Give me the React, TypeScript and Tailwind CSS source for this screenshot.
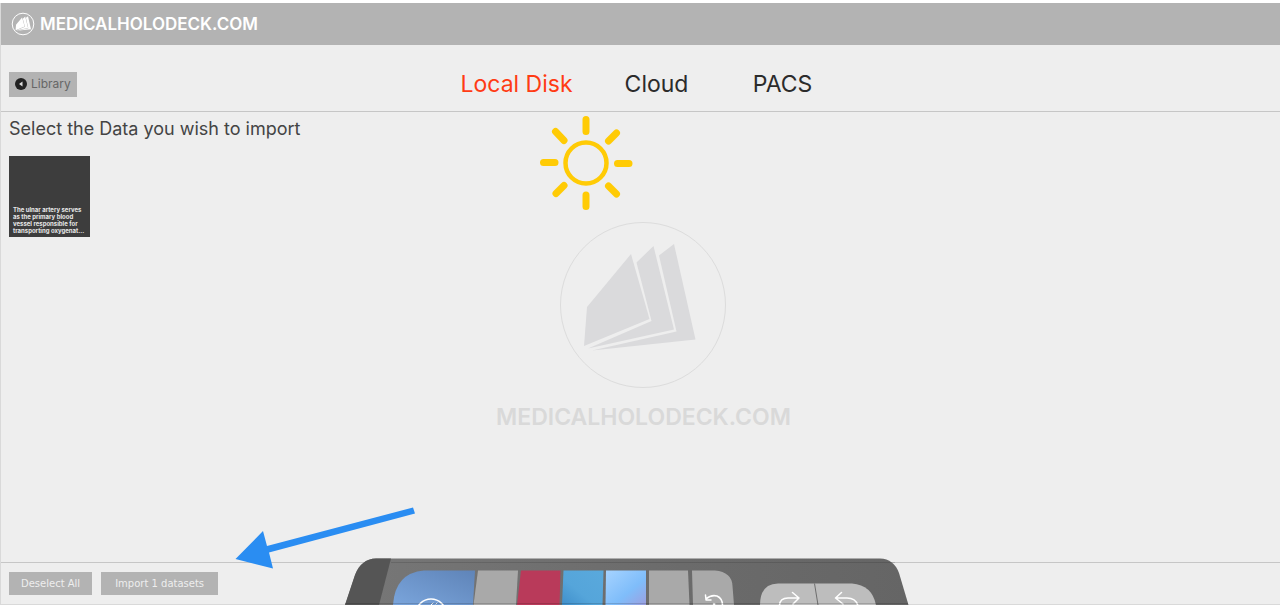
import React, { useState } from 'react';

const tabs = ['Local Disk', 'Cloud', 'PACS'];

const LogoShape: React.FC = () => (
  <>
    <path d="M631 254 L649.500 319 L584 346 L587 307 Z" />
    <path d="M636.500 262.500 L653.500 246 L674 329.500 L588 348.500 L651.500 321 Z" />
    <path d="M659 255.500 L674 244 L695.500 339.500 L592 350.500 L676.500 331.500 Z" />
  </>
);

const Sun: React.FC = () => (
  <svg viewBox="0 0 94 94" className="w-[94px] h-[94px]" fill="none" stroke="#ffcb05" strokeLinecap="round">
    <circle cx="47" cy="47" r="20.500" strokeWidth="4.500" />
    <path
      strokeWidth="7"
      d="M47 3.500v12M47 79v11.500M4.500 46.500h11.500M78.500 47.500h11.500M16.500 15.500l8.500 9M69.500 25l8-8M17 77.500l8-8M69.500 70l8 8"
    />
  </svg>
);

const Device: React.FC = () => (
  <svg viewBox="340 555 575 50" className="w-[575px] h-[50px]">
    <defs>
      <linearGradient id="body" x1="0" x2="1" y1="0" y2="0">
        <stop offset="0" stopColor="#777" />
        <stop offset="0.600" stopColor="#6b6b6b" />
        <stop offset="1" stopColor="#656565" />
      </linearGradient>
      <linearGradient id="navy" x1="0" x2="1" y1="1" y2="0">
        <stop offset="0" stopColor="#7aa5dc" />
        <stop offset="1" stopColor="#5f84b8" />
      </linearGradient>
      <linearGradient id="sky" x1="0" x2="1" y1="1" y2="0">
        <stop offset="0" stopColor="#3f8fcb" />
        <stop offset="0.400" stopColor="#55a5da" />
        <stop offset="1" stopColor="#5aa9dc" />
      </linearGradient>
      <linearGradient id="ice" x1="0" x2="1" y1="0" y2="1">
        <stop offset="0" stopColor="#a6d3ff" />
        <stop offset="0.600" stopColor="#7fbdfa" />
        <stop offset="1" stopColor="#9c9fe0" />
      </linearGradient>
    </defs>
    <path d="M345 605 L355 575 Q361 559 376 558.500 H880 Q894 559 899 573 L908.500 605 Z" fill="url(#body)" />
    <path d="M345 605 L355 575 Q361 559 376 558.500 H391 L379 605 Z" fill="#555" />
    <path d="M391 562.500 H895" stroke="#000" strokeOpacity="0.120" />
    <path d="M393 605 Q395 573 424 570.500 H475 L473 605 Z" fill="url(#navy)" />
    <path d="M478 570.500 H518 L516 605 H473.500 Z" fill="#a9a9a9" />
    <path d="M521 570.500 H560.500 L559.500 605 H517 Z" fill="#b93a5a" />
    <path d="M563.500 570.500 H603.500 L602.500 605 H562 Z" fill="url(#sky)" />
    <path d="M606 570.500 H646 V605 H605.500 Z" fill="url(#ice)" />
    <path d="M649 570.500 H688 L689.500 605 H649 Z" fill="#a9a9a9" />
    <path d="M692 570.500 H715 Q732 572 732.500 586 L734 605 H693 Z" fill="#a9a9a9" />
    <path d="M760 605 Q760 584 778 583.500 H852 Q872 585 876 605 Z" fill="#bdbdbd" />
    <path d="M814.500 583.500 L818 605" stroke="#6d6d6d" />
    <g fill="none" stroke="#fff" strokeWidth="1.500" strokeLinecap="round" strokeLinejoin="round">
      <circle cx="431" cy="614" r="15" />
      <path d="M431 605 l2 -2 M436 604 l1 -1" strokeWidth="1" />
      <path d="M706 599 Q711 594.500 717 596 Q722.500 598.500 722.500 605 M705.500 595 L706 600 L711 600" />
      <circle cx="714" cy="604" r="0.800" fill="#fff" strokeWidth="1" />
      <path d="M779.500 606 Q779.500 598 788 598 H799 M792.500 592.500 L799 598 L793 604" />
      <path d="M858 606 Q856 598 847 598 H836 M841.500 592.500 L835.500 598 L843 604" />
    </g>
    <path d="M345 603.500 H908" stroke="#000" strokeOpacity="0.150" />
  </svg>
);

const App: React.FC = () => {
  const [active, setActive] = useState('Local Disk');

  return (
    <div className="relative min-h-screen overflow-hidden flex flex-col pt-[3px] bg-white font-[Inter,sans-serif]">
      <div className="flex-1 flex flex-col border-l border-b border-[#d9d9d9] bg-[#eeeeee]">
        <header className="flex items-center h-[42px] pl-[10px] gap-[5px] bg-[#b3b3b3] text-white">
          <svg viewBox="0 0 24 24" className="w-6 h-6" fill="none">
            <circle cx="12" cy="12" r="10.800" stroke="#fff" />
            <g fill="#fff" transform="translate(-76 -29.500) scale(0.138)">
              <LogoShape />
            </g>
          </svg>
          <span className="text-[17px] leading-6 font-semibold">MEDICALHOLODECK.COM</span>
        </header>

        <nav className="grid grid-cols-[1fr_auto_1fr] items-center h-[67px] pt-3 pl-2 pr-1 border-b border-[#c6c6c6]">
          <button className="justify-self-start flex items-center gap-1 h-[25px] px-[6px] bg-[#b3b3b3] text-[12px] text-[#666]">
            <svg viewBox="0 0 12 12" className="w-3 h-3">
              <circle cx="6" cy="6" r="6" fill="#222" />
              <path d="M7.500 3.500v5L4 6z" fill="#ddd" />
            </svg>
            Library
          </button>
          <div className="flex gap-[42px]">
            {tabs.map((tab) => (
              <button
                key={tab}
                onClick={() => setActive(tab)}
                className={`min-w-[84px] text-[23px] leading-7 ${active === tab ? 'text-[#ff3b14]' : 'text-[#2b2b2b]'}`}
              >
                {tab}
              </button>
            ))}
          </div>
        </nav>

        <main className="relative flex-1 pl-2 pt-[6px]">
          <div className="absolute inset-x-0 top-[110px] pl-[6px] flex flex-col items-center gap-3 text-[#d9d9d9]">
            <svg viewBox="560 222 167 167" className="w-[167px] h-[167px]" fill="#dadadc">
              <circle cx="643" cy="305" r="82.500" fill="none" stroke="#dcdcdc" />
              <LogoShape />
            </svg>
            <span className="text-[23px] leading-8 font-semibold">MEDICALHOLODECK.COM</span>
          </div>

          <h1 className="relative text-[18px] leading-[22px] text-[#444]">Select the Data you wish to import</h1>
          <button className="relative flex items-end mt-4 w-[81px] h-[81px] p-1 pb-[3px] bg-[#3d3d3d] text-left text-[6px] leading-[7px] font-bold text-[#e8e8e8] whitespace-nowrap">
            <span>
              The ulnar artery serves
              <br />
              as the primary blood
              <br />
              vessel responsible for
              <br />
              transporting oxygenat...
            </span>
          </button>

          <div className="absolute top-1 left-1/2 -ml-[102px]">
            <Sun />
          </div>
        </main>

        <footer className="flex items-center gap-[9px] h-[42px] pl-2 border-t border-[#c6c6c6] font-[DejaVu_Sans,sans-serif] text-[10px] text-[#eeeeee]">
          <button className="h-[23px] px-3 bg-[#b3b3b3]">Deselect All</button>
          <button className="h-[23px] px-[14px] bg-[#b3b3b3]">Import 1 datasets</button>
        </footer>
      </div>

      {/* Pointer to the import button */}
      <svg viewBox="235 505 181 66" className="absolute bottom-[34px] left-[235px] w-[181px] h-[66px]" fill="#2a8df2">
        <path d="M235.500 559 L263 531 L267 546 L413 507.500 L415 513.500 L269 552.500 L273 568.500 Z" />
      </svg>

      {/* Controller peeking in from below */}
      <div className="absolute bottom-0 left-1/2 -ml-[300px]">
        <Device />
      </div>
    </div>
  );
};

export default App;
